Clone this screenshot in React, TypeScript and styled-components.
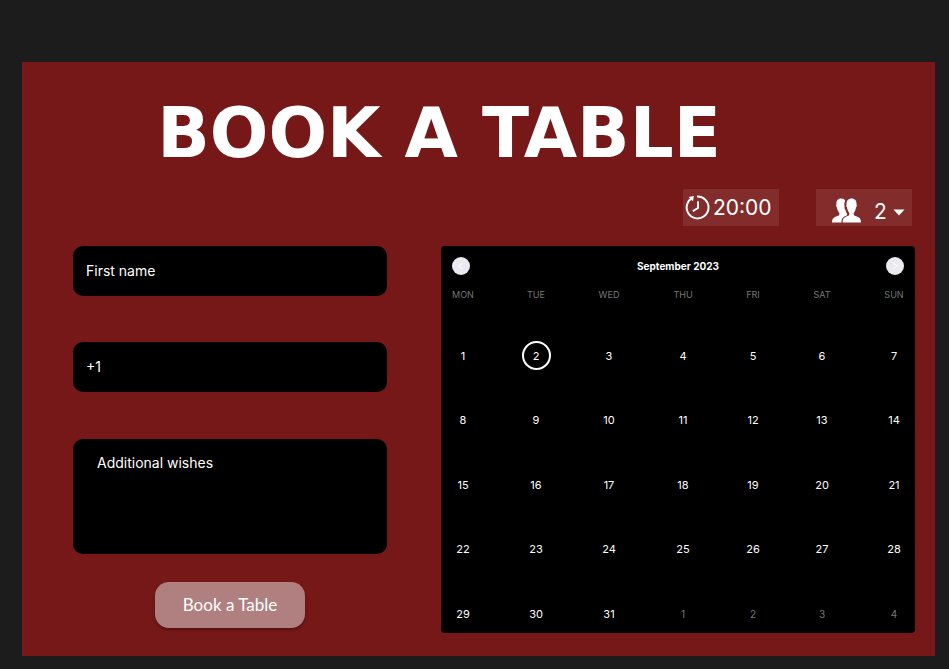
import React from "react";
import styled, { createGlobalStyle } from "styled-components";

const GlobalStyle = createGlobalStyle`
  * { box-sizing: border-box; }
  body { margin: 0; background: #1c1c1c; color: #fff; font-family: Inter, sans-serif; }
  button, input, textarea, select { font-family: inherit; color: inherit; border: 0; margin: 0; }
`;

const Page = styled.main`
  padding: 62px 14px 13px 22px;
`;

const Panel = styled.section`
  background: #761818;
  padding: 31px 20px 23px 51px;
`;

const Title = styled.h1`
  margin: 0;
  padding-right: 110px;
  font-family: "DejaVu Sans", sans-serif;
  font-weight: 700;
  font-size: 69px;
  line-height: 80px;
  text-align: center;
  white-space: nowrap;
`;

const Options = styled.div`
  display: flex;
  justify-content: flex-end;
  gap: 37px;
  margin: 16px 3px 20px 0;
`;

const TimeButton = styled.button`
  display: flex;
  align-items: center;
  gap: 3px;
  width: 96px;
  height: 37px;
  padding: 0 2px;
  background: #822c2c;
  font-size: 21px;
  font-weight: 400;
`;

const Guests = styled.label`
  display: flex;
  align-items: flex-end;
  gap: 12px;
  width: 96px;
  height: 37px;
  padding: 0 6px 3px 15px;
  background: #822c2c;
`;

const GuestSelect = styled.select`
  appearance: none;
  width: 19px;
  height: 22px;
  padding: 0;
  background: transparent;
  font-size: 21px;
  line-height: 22px;
  font-weight: 400;
`;

const Caret = styled.svg`
  flex: none;
  align-self: center;
  margin: 12px 0 0 -12px;
  pointer-events: none;
`;

const Columns = styled.div`
  display: grid;
  grid-template-columns: 314fr 474fr;
  gap: 54px;
`;

const Form = styled.form`
  display: flex;
  flex-direction: column;
`;

const Field = styled.input`
  height: 50px;
  margin-bottom: 46px;
  padding: 0 13px 1px;
  border-radius: 10px;
  background: #000;
  font-size: 14px;
  &::placeholder { color: #fff; opacity: 1; }
`;

const Wishes = styled.textarea`
  height: 115px;
  margin: 1px 0 28px;
  padding: 14px 24px;
  border-radius: 10px;
  background: #000;
  font-size: 14px;
  line-height: 20px;
  resize: none;
  &::placeholder { color: #fff; opacity: 1; }
`;

const Submit = styled.button`
  align-self: center;
  width: 150px;
  height: 46px;
  padding: 0 0 2px;
  border-radius: 14px;
  background: #b08080;
  box-shadow: 0 2px 3px rgba(0, 0, 0, 0.3);
  font-family: Lato, sans-serif;
  font-size: 17px;
`;

const Calendar = styled.section`
  display: flex;
  flex-direction: column;
  min-height: 387px;
  padding: 11px 11px 5px;
  border-radius: 4px;
  background: #000;
`;

const CalendarHead = styled.header`
  display: flex;
  align-items: center;
  justify-content: space-between;
`;

const Month = styled.h2`
  margin: 0;
  font-size: 10px;
  font-weight: 700;
`;

const Arrow = styled.button`
  display: grid;
  place-items: center;
  width: 18px;
  height: 18px;
  padding: 0;
  border-radius: 50%;
  background: #ebeaf0;
`;

const Days = styled.table`
  display: flex;
  flex: 1;
  flex-direction: column;
  margin-top: 10px;
  border-collapse: collapse;
`;

const Weeks = styled.tbody`
  display: flex;
  flex: 1;
  flex-direction: column;
  justify-content: space-between;
  margin-top: 36px;
`;

const Week = styled.tr`
  display: grid;
  grid-template-columns: 22px 16px 22px 18px 14px 16px 20px;
  justify-content: space-between;
`;

const Weekday = styled.th`
  padding: 0;
  justify-self: center;
  color: #777;
  font-size: 9px;
  line-height: 20px;
  font-weight: 400;
`;

const DayCell = styled.td`
  display: flex;
  justify-content: center;
  padding: 0;
`;

const DayButton = styled.button<{ $selected: boolean; $muted: boolean }>`
  flex: none;
  width: 29px;
  height: 29px;
  padding: 0;
  border: 2px solid ${(p) => (p.$selected ? "#fff" : "transparent")};
  border-radius: 50%;
  background: transparent;
  color: ${(p) => (p.$muted ? "#777" : "#fff")};
  font-size: ${(p) => (p.$muted ? 10 : 11)}px;
`;

const weekdays = ["MON", "TUE", "WED", "THU", "FRI", "SAT", "SUN"];
const weeks = Array.from({ length: 5 }, (_, w) =>
  Array.from({ length: 7 }, (_, d) => w * 7 + d + 1)
);

function ClockIcon() {
  return (
    <svg width="25" height="25" viewBox="0 0 24 24" fill="none" stroke="#fff" strokeWidth="1.9" aria-hidden="true">
      <path d="M11.500 1.500A10.500 10.500 0 1 1 2.300 8.200" />
      <path d="M2.300 8.200Q3.600 4.800 6 3.600" />
      <path d="M3.500 1.800l5-.8-.8 5z" fill="#fff" stroke="none" />
      <path d="M12.500 6v6.500L7.500 15.500" strokeWidth="1.800" />
    </svg>
  );
}

function PeopleIcon() {
  return (
    <svg width="31" height="26" viewBox="0 0 32 26" fill="#fff" aria-hidden="true">
      <path d="M1 26c0-4 2-5.500 5.500-6.700C8.300 18.500 9 18 8.600 16 7 14.500 6.300 12 5.900 10 5 9 5.200 7.500 5.700 7 5.200 3.500 7 1 10.500 1c2 0 3.500.9 4.200 2.400C13.400 5.600 13.800 8 14 9c-.3 1.600.2 3.200 1 4.100.3 1.800 1.100 3.200 1.700 3.900.1 1.300-.4 1.700-1.900 2.300C12.200 20.300 10.800 22 10.700 26z" />
      <path d="M12 26c.1-4.500 2-5.500 5-6.700 1.600-.7 2.200-1.300 1.900-3.300-1.300-1.400-2-3.700-2.300-5.700-1-.8-1-2.400-.5-3.300C15.700 3.300 17.800 1 21.200 1s5.500 2.300 5.100 6c.6.900.4 2.500-.5 3.300-.3 2-1 4.300-2.300 5.700-.3 2 .3 2.600 1.900 3.300 3.600 1.200 5.500 2.200 5.600 6.700z" />
    </svg>
  );
}

export default function App() {
  return (
    <>
      <GlobalStyle />
      <Page>
        <Panel>
          <Title>BOOK A TABLE</Title>
          <Options>
            <TimeButton type="button">
              <ClockIcon />
              20:00
            </TimeButton>
            <Guests aria-label="Guests">
              <PeopleIcon />
              <GuestSelect aria-label="Guests" defaultValue="2">
                {[1, 2, 3, 4, 5, 6].map((n) => (
                  <option key={n}>{n}</option>
                ))}
              </GuestSelect>
              <Caret width="12" height="7" viewBox="0 0 12 7" fill="#fff" aria-hidden="true">
                <path d="M.5.500h11L6 6.500z" />
              </Caret>
            </Guests>
          </Options>
          <Columns>
            <Form onSubmit={(e) => e.preventDefault()}>
              <Field type="text" aria-label="First name" placeholder="First name" />
              <Field type="tel" aria-label="Phone number" placeholder="+1" />
              <Wishes aria-label="Additional wishes" placeholder="Additional wishes" />
              <Submit type="submit">Book a Table</Submit>
            </Form>
            <Calendar>
              <CalendarHead>
                <Arrow type="button" aria-label="Previous month">
                  <svg width="8" height="8" viewBox="0 0 8 8" fill="none" stroke="#fff">
                    <path d="M6 1L1.500 4L6 7" />
                  </svg>
                </Arrow>
                <Month>September 2023</Month>
                <Arrow type="button" aria-label="Next month">
                  <svg width="8" height="8" viewBox="0 0 8 8" fill="none" stroke="#fff">
                    <path d="M2 1L6.500 4L2 7" />
                  </svg>
                </Arrow>
              </CalendarHead>
              <Days>
                <thead>
                  <Week>
                    {weekdays.map((d) => (
                      <Weekday key={d} scope="col">{d}</Weekday>
                    ))}
                  </Week>
                </thead>
                <Weeks>
                  {weeks.map((week) => (
                    <Week key={week[0]}>
                      {week.map((n) => (
                        <DayCell key={n}>
                          <DayButton type="button" $selected={n === 2} $muted={n > 31}>
                            {n > 31 ? n - 31 : n}
                          </DayButton>
                        </DayCell>
                      ))}
                    </Week>
                  ))}
                </Weeks>
              </Days>
            </Calendar>
          </Columns>
        </Panel>
      </Page>
    </>
  );
}
